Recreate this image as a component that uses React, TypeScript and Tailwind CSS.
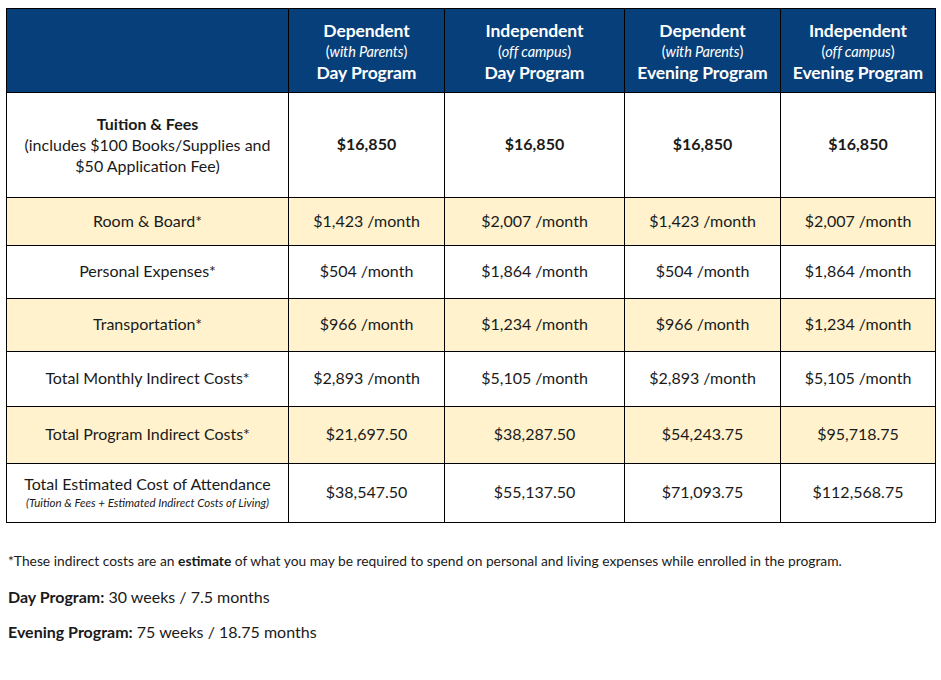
const rows = [
  { label: "Room & Board*", vals: ["$1,423 /month", "$2,007 /month", "$1,423 /month", "$2,007 /month"], shade: true, h: "h-[48px]" },
  { label: "Personal Expenses*", vals: ["$504 /month", "$1,864 /month", "$504 /month", "$1,864 /month"], shade: false, h: "h-[53px]" },
  { label: "Transportation*", vals: ["$966 /month", "$1,234 /month", "$966 /month", "$1,234 /month"], shade: true, h: "h-[53px]" },
  { label: "Total Monthly Indirect Costs*", vals: ["$2,893 /month", "$5,105 /month", "$2,893 /month", "$5,105 /month"], shade: false, h: "h-[55px]" },
  { label: "Total Program Indirect Costs*", vals: ["$21,697.50", "$38,287.50", "$54,243.75", "$95,718.75"], shade: true, h: "h-[57px]" },
];

const heads = [
  { top: "Dependent", note: "with Parents", bottom: "Day Program" },
  { top: "Independent", note: "off campus", bottom: "Day Program" },
  { top: "Dependent", note: "with Parents", bottom: "Evening Program" },
  { top: "Independent", note: "off campus", bottom: "Evening Program" },
];

const cell = "border border-black text-center align-middle";

export default function App() {
  return (
    <div className="w-[941px] h-[680px] bg-white text-[#1a1a1a] font-['Lato','Liberation_Sans',sans-serif]">
      <div className="pl-[6px] pt-[8px]">
        {/* cost table */}
        <table className="table-fixed border-collapse w-[929px]">
          <colgroup>
            <col className="w-[282px]" />
            <col className="w-[156px]" />
            <col className="w-[180px]" />
            <col className="w-[156px]" />
            <col className="w-[155px]" />
          </colgroup>
          <thead>
            <tr className="h-[84px] bg-[#073f7a] text-white">
              <th className={cell}></th>
              {heads.map((hd, i) => (
                <th key={i} className={cell + " leading-[21px] pt-[1px] tracking-[-0.1px]"}>
                  <div className="text-[17.5px] font-bold">{hd.top}</div>
                  <div className="text-[14.5px] font-normal">
                    (<span className="italic">{hd.note}</span>)
                  </div>
                  <div className="text-[17.5px] font-bold">{hd.bottom}</div>
                </th>
              ))}
            </tr>
          </thead>
          <tbody className="text-[16px]">
            <tr className="h-[105px]">
              <td className={cell + " leading-[21px] pb-[2px]"}>
                <div className="font-bold">Tuition &amp; Fees</div>
                <div>(includes $100 Books/Supplies and</div>
                <div>$50 Application Fee)</div>
              </td>
              {[0, 1, 2, 3].map((i) => (
                <td key={i} className={cell + " font-bold pb-[2px]"}>$16,850</td>
              ))}
            </tr>
            {rows.map((r) => (
              <tr key={r.label} className={r.h + (r.shade ? " bg-[#fff2cc]" : "")}>
                <td className={cell + " pb-[2px]"}>{r.label}</td>
                {r.vals.map((v, i) => (
                  <td key={i} className={cell + " pb-[2px]"}>{v}</td>
                ))}
              </tr>
            ))}
            <tr className="h-[59px]">
              <td className={cell + " leading-[19px]"}>
                <div>Total Estimated Cost of Attendance</div>
                <div className="text-[11.5px] italic">(Tuition &amp; Fees + Estimated Indirect Costs of Living)</div>
              </td>
              {["$38,547.50", "$55,137.50", "$71,093.75", "$112,568.75"].map((v, i) => (
                <td key={i} className={cell + " pb-[2px]"}>{v}</td>
              ))}
            </tr>
          </tbody>
        </table>

        {/* notes */}
        <div className="pt-[28px] pl-[2px] text-[13.8px]">
          *These indirect costs are an <span className="font-bold">estimate</span> of what you may be required to spend on personal and living expenses while enrolled in the program.
        </div>
        <div className="pt-[13px] pl-[2px] text-[16px]">
          <span className="font-bold">Day Program:</span> 30 weeks / 7.5 months
        </div>
        <div className="pt-[11px] pl-[2px] text-[16px]">
          <span className="font-bold">Evening Program:</span> 75 weeks / 18.75 months
        </div>
      </div>
    </div>
  );
}
